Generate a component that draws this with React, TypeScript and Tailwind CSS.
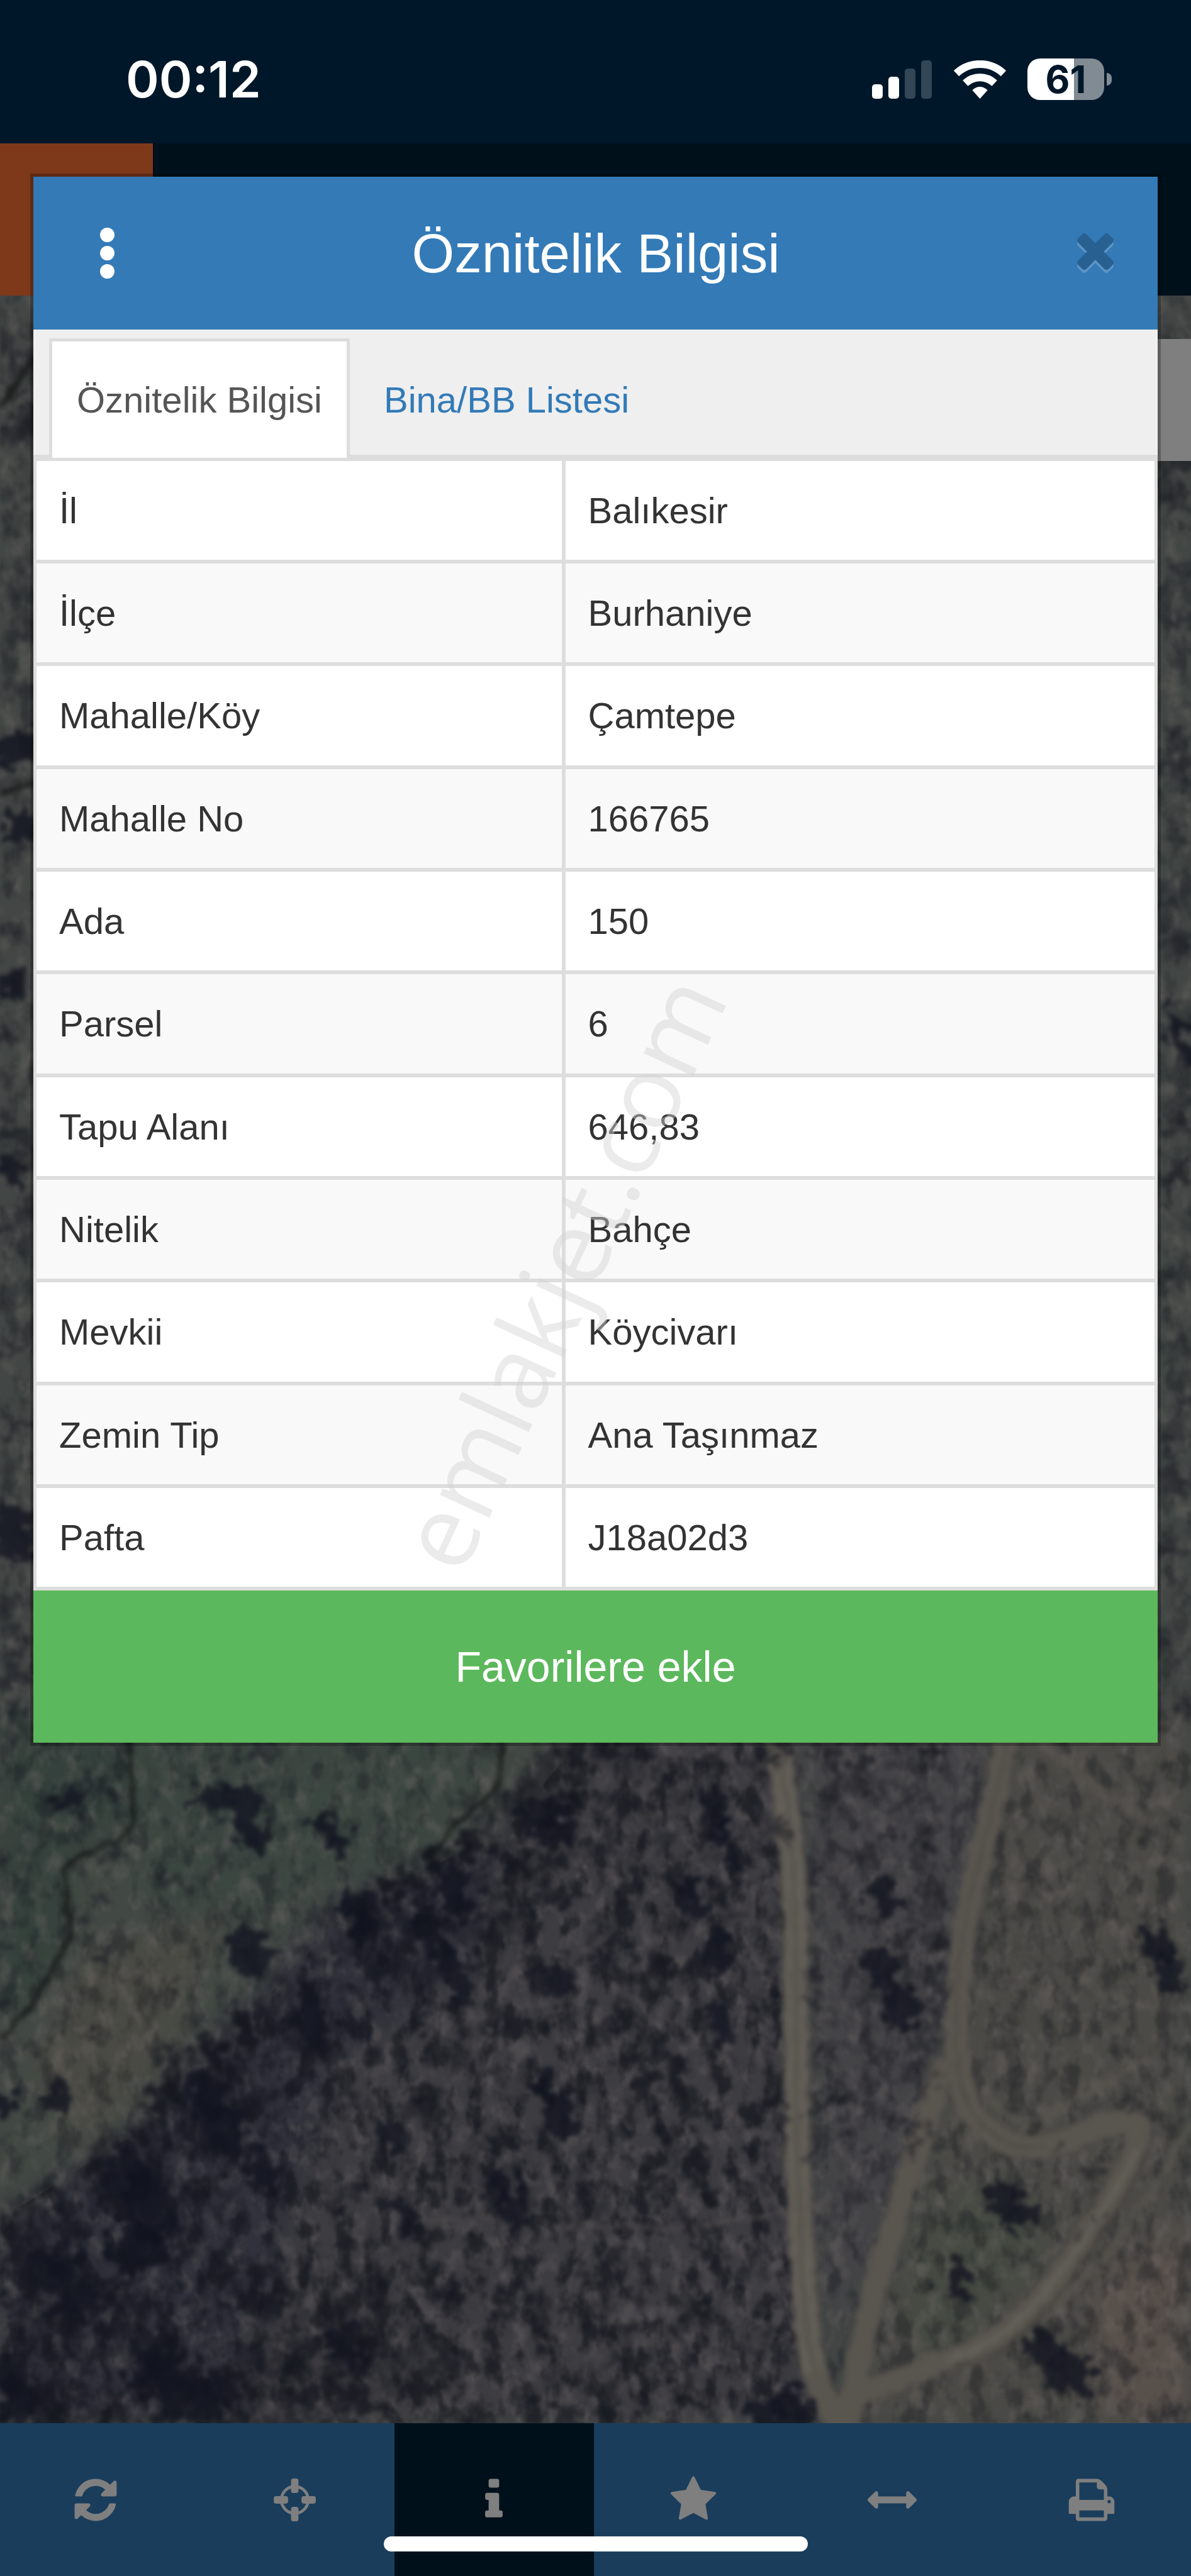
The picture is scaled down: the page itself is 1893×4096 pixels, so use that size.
import { useState } from 'react';

const attributes = [
    { label: 'İl', value: 'Balıkesir' },
    { label: 'İlçe', value: 'Burhaniye' },
    { label: 'Mahalle/Köy', value: 'Çamtepe' },
    { label: 'Mahalle No', value: '166765' },
    { label: 'Ada', value: '150' },
    { label: 'Parsel', value: '6' },
    { label: 'Tapu Alanı', value: '646,83' },
    { label: 'Nitelik', value: 'Bahçe' },
    { label: 'Mevkii', value: 'Köycivarı' },
    { label: 'Zemin Tip', value: 'Ana Taşınmaz' },
    { label: 'Pafta', value: 'J18a02d3' },
];

const tabs = ['Öznitelik Bilgisi', 'Bina/BB Listesi'];

const faIcons = {
    refresh:
        'M1639 1056q0 5-1 7-64 268-268 434.5t-478 166.5q-146 0-282.5-55t-243.5-157l-129 129q-19 19-45 19t-45-19-19-45v-448q0-26 19-45t45-19h448q26 0 45 19t19 45-19 45l-137 137q71 66 161 102t187 36q134 0 250-65t186-179q11-17 53-117 8-23 30-23h192q13 0 22.5 9.5t9.5 22.5zm25-800v448q0 26-19 45t-45 19h-448q-26 0-45-19t-19-45 19-45l138-138q-148-137-349-137-134 0-250 65t-186 179q-11 17-53 117-8 23-30 23h-199q-13 0-22.5-9.5t-9.5-22.5v-7q65-268 270-434.5t480-166.5q146 0 284 55.5t245 156.5l130-129q19-19 45-19t45 19 19 45z',
    info: 'M1216 1344v128q0 26-19 45t-45 19h-512q-26 0-45-19t-19-45v-128q0-26 19-45t45-19h64v-384h-64q-26 0-45-19t-19-45v-128q0-26 19-45t45-19h384q26 0 45 19t19 45v576h64q26 0 45 19t19 45zm-128-1152v192q0 26-19 45t-45 19h-256q-26 0-45-19t-19-45v-192q0-26 19-45t45-19h256q26 0 45 19t19 45z',
    star: 'M1728 647q0 22-26 48l-363 354 86 500q1 7 1 20 0 21-10.5 35.5t-30.5 14.5q-19 0-40-12l-449-236-449 236q-22 12-40 12-21 0-31.5-14.5t-10.5-35.5q0-6 2-20l86-500-364-354q-25-27-25-48 0-37 56-46l502-73 225-455q19-41 49-41t49 41l225 455 502 73q56 9 56 46z',
    arrows: 'M1792 896q0 26-19 45l-256 256q-19 19-45 19t-45-19-19-45v-128h-1024v128q0 26-19 45t-45 19-45-19l-256-256q-19-19-19-45t19-45l256-256q19-19 45-19t45 19 19 45v128h1024v-128q0-26 19-45t45-19 45 19l256 256q19 19 19 45z',
    print: 'M448 1536h896v-256h-896v256zm0-640h896v-384h-160q-40 0-68-28t-28-68v-160h-640v640zm1152 64q0-26-19-45t-45-19-45 19-19 45 19 45 45 19 45-19 19-45zm128 0v416q0 13-9.5 22.5t-22.5 9.5h-224v160q0 40-28 68t-68 28h-960q-40 0-68-28t-28-68v-160h-224q-13 0-22.5-9.5t-9.5-22.5v-416q0-79 56.5-135.5t135.5-56.5h64v-544q0-40 28-68t68-28h672q40 0 88 20t76 48l152 152q28 28 48 76t20 88v256h64q79 0 135.5 56.5t56.5 135.5z',
    times: 'M1490 1322q0 40-28 68l-136 136q-28 28-68 28t-68-28l-294-294-294 294q-28 28-68 28t-68-28l-136-136q-28-28-28-68t28-68l294-294-294-294q-28-28-28-68t28-68l136-136q28-28 68-28t68 28l294 294 294-294q28-28 68-28t68 28l136 136q28 28 28 68t-28 68l-294 294 294 294q28 28 28 68z',
};

function FaIcon({ d }: { d: string }) {
    return (
        <svg viewBox="0 0 1792 1792" className="w-[78px] h-[78px]" fill="currentColor" aria-hidden="true">
            <path d={d} />
        </svg>
    );
}

function TargetIcon() {
    return (
        <svg viewBox="53 38 226 230" className="w-[67px] h-[68px]" fill="currentColor" aria-hidden="true">
            <circle cx="166" cy="153" r="72" fill="none" stroke="currentColor" strokeWidth="16" />
            <rect x="146" y="38" width="40" height="78" rx="12" />
            <rect x="146" y="190" width="40" height="78" rx="12" />
            <rect x="53" y="133" width="77" height="40" rx="12" />
            <rect x="202" y="133" width="77" height="40" rx="12" />
        </svg>
    );
}

const navItems = [
    { id: 'refresh', label: 'Yenile', icon: <FaIcon d={faIcons.refresh} /> },
    { id: 'locate', label: 'Konum', icon: <TargetIcon /> },
    { id: 'info', label: 'Bilgi', icon: <FaIcon d={faIcons.info} /> },
    { id: 'favorites', label: 'Favoriler', icon: <FaIcon d={faIcons.star} /> },
    { id: 'measure', label: 'Ölçüm', icon: <FaIcon d={faIcons.arrows} /> },
    { id: 'print', label: 'Yazdır', icon: <FaIcon d={faIcons.print} /> },
];

// Small seeded generator so the trees stay in place between renders
function createRandom(seed: number) {
    let s = seed;
    return () => {
        s = (s * 1664525 + 1013904223) % 4294967296;
        return s / 4294967296;
    };
}

const forestEdge = [
    [529, 1500], [3050, 1100], [3116, 1000], [3312, 790], [3384, 630], [3527, 600], [3580, 462],
    [3679, 312], [3777, 270], [3857, 177], [3947, 0], [4400, 0],
];

function edgeAt(y: number) {
    for (let i = 1; i < forestEdge.length; i++) {
        const [y1, x1] = forestEdge[i];
        const [y0, x0] = forestEdge[i - 1];
        if (y <= y1) return x0 + ((x1 - x0) * (y - y0)) / (y1 - y0);
    }
    return 0;
}

type Blob = { x: number; y: number; rx: number; ry: number; o: number; r: number };

function makeTrees(): Blob[] {
    const rand = createRandom(41);
    const out: Blob[] = [];
    while (out.length < 1000) {
        const y = 3080 + rand() * 1270;
        const x = rand() * 1400;
        const edge = edgeAt(y);
        if (x < edge) continue;
        // thick along the meadow and in the south, thinning out towards the road
        const near = Math.max(y > 4050 && x < 700 ? 0.7 : 0.2, 1 - (x - edge) / 420);
        if (rand() > near) continue;
        out.push({ x, y, rx: 4 + rand() * 13, ry: 8 + rand() * 24, o: 0.2 + rand() * 0.5, r: -32 + rand() * 26 });
    }
    for (let i = 0; i < 170; i++) {
        out.push({ x: 1450 + rand() * 240, y: 3110 + rand() * 760, rx: 4 + rand() * 8, ry: 6 + rand() * 15, o: 0.2 + rand() * 0.35, r: 20 });
    }
    for (let i = 0; i < 100; i++) {
        out.push({ x: 1780 + rand() * 350, y: 3120 + rand() * 1200, rx: 3 + rand() * 9, ry: 4 + rand() * 10, o: 0.15 + rand() * 0.35, r: 10 });
    }
    for (let i = 0; i < 45; i++) {
        out.push({ x: rand() * 480, y: 3130 + rand() * 560, rx: 4 + rand() * 11, ry: 4 + rand() * 12, o: 0.25 + rand() * 0.45, r: 10 });
    }
    for (let i = 0; i < 120; i++) {
        const x = rand() > 0.5 ? rand() * 60 : 2070 + rand() * 60;
        out.push({ x, y: 560 + rand() * 2540, rx: 8 + rand() * 26, ry: 4 + rand() * 22, o: 0.1 + rand() * 0.35, r: -15 });
    }
    return out;
}

const trees = makeTrees();

const largeTrees = [
    [1582, 3530, 24, 50], [1615, 3590, 30, 44], [975, 3730, 16, 40], [1000, 3785, 28, 44], [900, 3910, 24, 34],
    [920, 3955, 24, 40], [720, 3964, 20, 50], [706, 3826, 18, 42], [998, 3540, 20, 42], [1275, 3232, 20, 46],
    [1300, 3300, 12, 56], [1236, 3402, 20, 38], [1283, 3487, 22, 44], [1290, 3616, 20, 42], [1582, 3393, 28, 34],
    [2070, 3480, 28, 34], [2090, 3530, 26, 40], [1795, 3930, 36, 26], [1825, 3965, 36, 26], [1870, 4200, 34, 34],
    [1910, 4250, 44, 40], [1370, 4318, 32, 34], [1420, 4310, 34, 44], [385, 3215, 44, 22], [440, 3230, 36, 34],
    [450, 3285, 32, 34], [122, 3214, 28, 22], [585, 3265, 24, 30], [605, 3300, 22, 26], [430, 3475, 32, 24],
    [455, 3505, 34, 26], [225, 3890, 44, 46], [265, 3950, 46, 66], [250, 4020, 50, 50], [370, 3750, 36, 44],
    [400, 3810, 40, 56], [774, 3460, 22, 60], [815, 3540, 18, 50], [280, 4240, 56, 46], [350, 4290, 66, 40],
    [20, 4240, 34, 40], [30, 4300, 40, 34], [102, 3750, 22, 32], [10, 3760, 22, 26], [557, 3616, 32, 48],
    [640, 3410, 28, 40], [660, 3450, 24, 34], [815, 3384, 32, 36], [960, 3245, 36, 32], [1000, 3275, 34, 26],
    [1711, 4080, 24, 30], [100, 4060, 50, 40], [140, 4120, 46, 36], [470, 3880, 26, 50], [620, 4200, 24, 50],
    [30, 1340, 44, 34], [40, 1480, 36, 26], [16, 1760, 30, 24], [20, 2090, 30, 30], [20, 2740, 40, 56],
    [2110, 1850, 14, 60],
];

function SatelliteMap() {
    return (
        <svg viewBox="0 529 2130 3806" preserveAspectRatio="none" className="absolute inset-0 w-full h-full" aria-hidden="true">
            <defs>
                <filter id="soft" x="-10%" y="-10%" width="120%" height="120%" colorInterpolationFilters="sRGB">
                    <feTurbulence type="fractalNoise" baseFrequency="0.04" numOctaves="3" seed="5" />
                    <feDisplacementMap in="SourceGraphic" scale="14" xChannelSelector="R" yChannelSelector="G" />
                    <feGaussianBlur stdDeviation="5" />
                </filter>
                <filter id="wide" x="-20%" y="-20%" width="140%" height="140%" colorInterpolationFilters="sRGB">
                    <feGaussianBlur stdDeviation="24" />
                </filter>
                <filter id="rough" x="-10%" y="-10%" width="120%" height="120%" colorInterpolationFilters="sRGB">
                    <feTurbulence type="fractalNoise" baseFrequency="0.04" numOctaves="4" seed="8" />
                    <feDisplacementMap in="SourceGraphic" scale="75" xChannelSelector="R" yChannelSelector="G" />
                    <feGaussianBlur stdDeviation="4" />
                </filter>
                <filter id="darkNoise" x="0" y="0" width="100%" height="100%" colorInterpolationFilters="sRGB">
                    <feTurbulence type="fractalNoise" baseFrequency="0.03 0.02" numOctaves="4" seed="3" />
                    <feColorMatrix values="0 0 0 0 0.07  0 0 0 0 0.08  0 0 0 0 0.11  4 0 0 0 -1.9" />
                    <feGaussianBlur stdDeviation="2" />
                </filter>
                <filter id="lightNoise" x="0" y="0" width="100%" height="100%" colorInterpolationFilters="sRGB">
                    <feTurbulence type="fractalNoise" baseFrequency="0.035 0.025" numOctaves="4" seed="12" />
                    <feColorMatrix values="0 0 0 0 0.46  0 0 0 0 0.43  0 0 0 0 0.42  0 3 0 0 -1.4" />
                    <feGaussianBlur stdDeviation="2" />
                </filter>
                <clipPath id="forest">
                    <path d="M1080 3060H1400L1440 4335H0V3970L270 3800 460 3590 640 3400 900 3280Z" />
                </clipPath>
            </defs>

            <rect y="529" width="2130" height="3806" fill="#424644" />

            {/* Ground tones */}
            <g filter="url(#wide)">
                <path d="M0 3080H1060L815 3312 640 3400 600 3540 460 3590 310 3690 270 3800 180 3870 0 3960Z" fill="#424944" />
                <path d="M0 3060H240V3240L120 3340 120 3470 0 3640Z" fill="#35413c" />
                <path d="M250 3060H900L800 3300 600 3370 300 3480 240 3300Z" fill="#3c4641" />
                <path d="M140 3500 400 3420 300 3680 140 3850 60 3700Z" fill="#4a4a44" />
                <path d="M1080 3060H1400L1460 4335H0V3970L270 3800 460 3590 640 3400 900 3280Z" fill="#3d3c41" />
                <path d="M250 3800 600 3400 900 3300 860 3500 600 3700 420 4335H0V3970Z" fill="#30313a" />
                <path d="M1440 3060H1780L1680 3700 1580 4000 1480 4200Z" fill="#444346" />
                <path d="M1800 3060H2130V4335H1520L1700 3700Z" fill="#4b4a46" />
                <path d="M1950 4100 2130 3960V4335H1980Z" fill="#58504b" />
                <path d="M1640 3960 1800 3900 1880 4000 1740 4180 1620 4200Z" fill="#454a42" />
            </g>

            <rect y="529" width="2130" height="3806" filter="url(#lightNoise)" opacity="0.35" />
            <rect y="529" width="2130" height="3806" filter="url(#darkNoise)" opacity="0.35" />
            <g clipPath="url(#forest)">
                <rect y="3080" width="1460" height="1255" filter="url(#darkNoise)" opacity="0.45" />
            </g>

            {/* Creek and field borders */}
            <g fill="none" stroke="#191d1c" filter="url(#soft)">
                <path d="M228 3060C240 3180 236 3220 240 3260 220 3310 130 3310 114 3345L128 3460C110 3500 70 3550 56 3590L0 3650" strokeWidth="8" />
                <path d="M900 3116 890 3200 820 3260 760 3330" strokeWidth="8" />
                <path d="M0 730 62 640M0 1420 62 1400" strokeWidth="10" />
            </g>

            {/* Tracks */}
            <g fill="none" strokeLinecap="round" strokeLinejoin="round" filter="url(#soft)">
                <g stroke="#59554f">
                    <path d="M1380 3040C1398 3180 1412 3240 1416 3330 1428 3500 1420 3700 1428 3900 1434 4040 1436 4150 1456 4240L1510 4380" strokeWidth="46" />
                    <path d="M1806 3040C1790 3200 1748 3330 1730 3420 1712 3520 1704 3620 1716 3710 1730 3800 1790 3850 1870 3840 1930 3830 1980 3780 2036 3800" strokeWidth="42" />
                    <path d="M1686 3700C1640 3850 1590 4000 1560 4110 1540 4200 1530 4260 1510 4380" strokeWidth="42" />
                    <path d="M2036 3800C2040 3880 1940 4000 1900 4060 1820 4170 1760 4200 1700 4220 1640 4240 1580 4270 1520 4290" strokeWidth="40" />
                    <path d="M1760 3740C1800 3810 1860 3800 1900 3770L2040 3690" strokeWidth="12" opacity="0.7" />
                    <path d="M2130 3800 2060 3920 1960 4060 1840 4160" strokeWidth="12" opacity="0.7" />
                    <path d="M1870 3120 1960 3200 2110 3290" strokeWidth="20" opacity="0.5" />
                </g>
                <g stroke="#6b6660" strokeWidth="9" opacity="0.7">
                    <path d="M1392 3040C1410 3180 1424 3240 1428 3330 1440 3500 1432 3700 1440 3900 1446 4040 1448 4150 1468 4240" />
                    <path d="M1370 3040C1388 3180 1402 3240 1406 3330 1416 3500 1408 3700 1416 3900 1422 4040 1424 4150 1444 4240" />
                    <path d="M2030 3850C2000 3920 1940 4000 1900 4060 1820 4170 1760 4200 1700 4220" />
                </g>
                <g stroke="#45413e" strokeWidth="6">
                    <path d="M1802 3100C1790 3200 1748 3330 1730 3420 1712 3520 1704 3620 1716 3710 1730 3800 1790 3850 1870 3840" opacity="0.5" />
                    <path d="M2050 3850C2020 3930 1960 4010 1920 4070 1840 4180 1780 4215 1710 4235" />
                </g>
                <path d="M760 3976C900 3950 950 3990 1100 3980 1250 4000 1330 3960 1480 3945" stroke="#5a5450" strokeWidth="6" opacity="0.6" />
            </g>

            <g filter="url(#rough)">
                {trees.map((t, i) => (
                    <ellipse key={i} cx={t.x} cy={t.y} rx={t.rx} ry={t.ry} fill="#15171f" opacity={t.o} transform={`rotate(${t.r} ${t.x} ${t.y})`} />
                ))}
                {largeTrees.map(([x, y, rx, ry]) => (
                    <ellipse key={`${x}-${y}`} cx={x} cy={y} rx={rx} ry={ry} fill="#11141f" opacity="0.8" transform={`rotate(-18 ${x} ${y})`} />
                ))}
            </g>
        </svg>
    );
}

function StatusBar() {
    return (
        <div className="h-[228px] bg-[#00172a] flex items-center justify-between pl-[200px] pr-[126px] text-white">
            <span className="font-['Inter'] font-semibold text-[80px] leading-none mt-[24px]">00:12</span>
            <div className="flex items-center gap-[34px] mt-[24px]">
                <svg viewBox="0 0 96 61" className="w-[96px] h-[61px]" aria-hidden="true">
                    <rect x="0" y="38" width="17" height="23" rx="5" fill="#fff" />
                    <rect x="26" y="26" width="17" height="35" rx="5" fill="#fff" />
                    <rect x="52" y="13" width="17" height="48" rx="5" fill="#334655" />
                    <rect x="78" y="0" width="17" height="61" rx="5" fill="#334655" />
                </svg>
                <svg viewBox="490 140 278 205" className="w-[83px] h-[61px]" aria-hidden="true">
                    <g fill="none" stroke="#fff" strokeWidth="41">
                        <path d="M503 210A184 184 0 0 1 755 210" />
                        <path d="M551 262A114 114 0 0 1 707 262" />
                    </g>
                    <path d="M588 299Q629 264 670 299L629 345Z" fill="#fff" />
                </svg>
                <div className="flex items-center gap-[4px]">
                    <div className="w-[122px] h-[66px] rounded-[20px] flex items-center justify-center bg-linear-to-r from-white from-61% to-[#808b94] to-61%">
                        <span className="font-['Inter'] font-bold text-[60px] leading-[66px] text-[#00172a]">61</span>
                    </div>
                    <div className="w-[8px] h-[20px] rounded-r-full bg-[#808b94]" />
                </div>
            </div>
        </div>
    );
}

export default function App() {
    const [activeTab, setActiveTab] = useState(tabs[0]);
    const [activeNav, setActiveNav] = useState('info');

    return (
        <div className="relative min-h-screen flex flex-col overflow-hidden bg-[#00101b] font-['Liberation_Sans',Arial,sans-serif]">
            <StatusBar />

            {/* App bar, dimmed behind the dialog */}
            <header className="h-[242px] flex bg-[#00101b]">
                <div className="w-[243px] bg-[#7e391b]" />
            </header>

            <main className="relative flex-1">
                <SatelliteMap />
                <div className="absolute right-0 top-[69px] w-[54px] h-[194px] bg-[#7f7f7f]" />
            </main>

            <nav className="h-[243px] bg-[#1a3d5c] overflow-hidden">
                <ul className="grid grid-cols-6 h-full -ml-[6px]">
                    {navItems.map((item) => (
                        <li key={item.id}>
                            <button
                                type="button"
                                aria-label={item.label}
                                onClick={() => setActiveNav(item.id)}
                                className={`w-full h-full flex items-center justify-center text-[#7f7f7f] ${
                                    activeNav === item.id ? 'bg-[#00101b]' : ''
                                }`}
                            >
                                {item.icon}
                            </button>
                        </li>
                    ))}
                </ul>
            </nav>

            {/* Attribute dialog */}
            <section
                role="dialog"
                aria-labelledby="dialog-title"
                className="absolute inset-x-[53px] top-[281px] bg-white shadow-[0_0_0_5px_rgba(0,0,0,0.25)]"
            >
                <div className="h-[243px] bg-[#337ab7] flex items-center justify-between pl-[106px] pr-[70px]">
                    <button type="button" aria-label="Menü" className="w-[23px] flex flex-col items-center gap-[6px]">
                        <span className="w-[23px] h-[23px] rounded-full bg-white" />
                        <span className="w-[23px] h-[23px] rounded-full bg-white" />
                        <span className="w-[23px] h-[23px] rounded-full bg-white" />
                    </button>
                    <h1 id="dialog-title" className="text-[87px] leading-none text-white">
                        Öznitelik Bilgisi
                    </h1>
                    <button type="button" aria-label="Kapat" className="opacity-20">
                        <svg viewBox="302 366 1188 1290" className="w-[58px] h-[63px]">
                            <path d={faIcons.times} fill="#fff" transform="translate(0 100)" />
                            <path d={faIcons.times} />
                        </svg>
                    </button>
                </div>

                <div role="tablist" className="flex items-end gap-[10px] h-[204px] pl-[25px] bg-[#efefef] border-b-[5px] border-[#ddd]">
                    {tabs.map((tab) => (
                        <button
                            key={tab}
                            type="button"
                            role="tab"
                            aria-selected={tab === activeTab}
                            onClick={() => setActiveTab(tab)}
                            className={`h-[190px] -mb-[5px] px-[39px] text-[58px] leading-none border-x-[5px] border-t-[5px] ${
                                tab === activeTab ? 'bg-white text-[#555] border-[#ddd]' : 'text-[#337ab7] border-transparent'
                            }`}
                        >
                            {tab}
                        </button>
                    ))}
                </div>

                <table className="w-full table-fixed border-separate border-spacing-0 border-x-[5px] border-t-[5px] border-[#ddd] text-[58px] leading-none text-[#333]">
                    <tbody>
                        {attributes.map((row) => (
                            <tr key={row.label} className="h-[163px] nth-[3n]:h-[164px] even:bg-[#f9f9f9]">
                                <th scope="row" className="w-[47.3%] pl-[36px] text-left font-normal border-b-[6px] border-r-[6px] border-[#ddd]">
                                    {row.label}
                                </th>
                                <td className="pl-[36px] border-b-[6px] border-[#ddd]">{row.value}</td>
                            </tr>
                        ))}
                    </tbody>
                </table>

                <button type="button" className="block w-full h-[242px] bg-[#5cb85c] text-white text-[68px] leading-none">
                    Favorilere ekle
                </button>
            </section>

            {/* Watermark runs along the page diagonal */}
            <div className="absolute inset-0 flex items-center justify-center pointer-events-none">
                <svg viewBox="-946 -2048 1892 4096" className="w-full h-full" aria-hidden="true">
                    <text
                        textAnchor="middle"
                        transform="rotate(-65.2)"
                        className="font-['Open_Sans',sans-serif] text-[162px] fill-[#d3d3d3] opacity-45"
                    >
                        emlakjet.com
                    </text>
                </svg>
            </div>

            {/* Home indicator */}
            <div className="absolute inset-x-0 bottom-[39px] flex justify-center pointer-events-none">
                <div className="w-[674px] h-[24px] rounded-full bg-white" />
            </div>
        </div>
    );
}
